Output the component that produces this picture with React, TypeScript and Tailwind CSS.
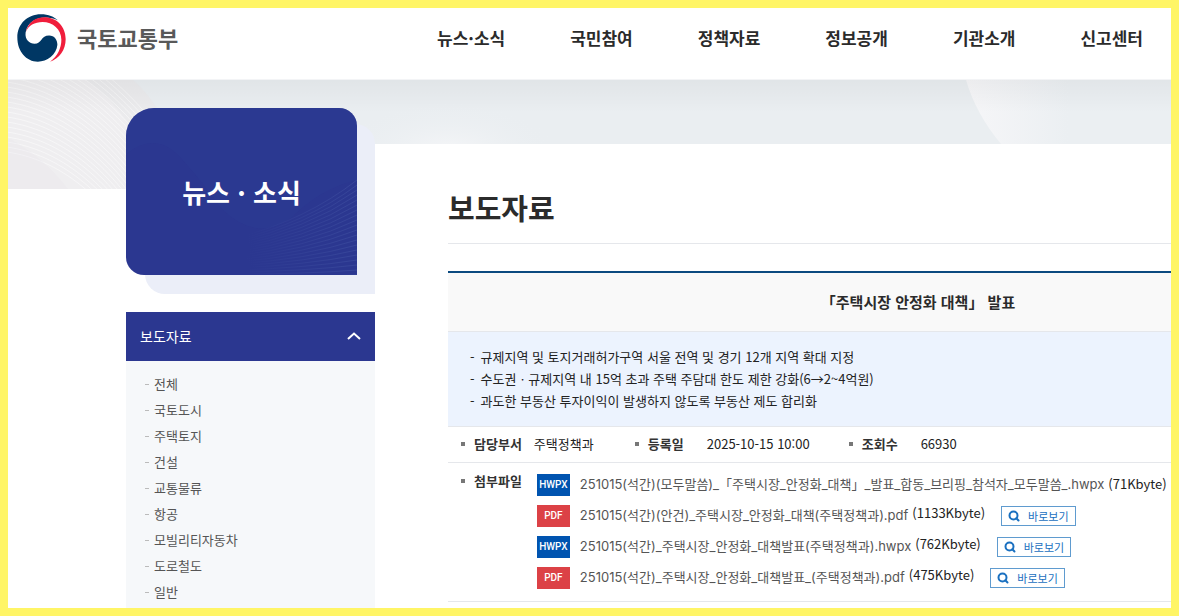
import { Search } from 'lucide-react'
import clsx from 'clsx'

interface Attachment {
  type: 'HWPX' | 'PDF'
  name: string
  size: string
  preview: boolean
}

const navItems = ['뉴스·소식', '국민참여', '정책자료', '정보공개', '기관소개', '신고센터']

const categories = [
  '전체',
  '국토도시',
  '주택토지',
  '건설',
  '교통물류',
  '항공',
  '모빌리티자동차',
  '도로철도',
  '일반'
]

const summary = [
  '규제지역 및 토지거래허가구역 서울 전역 및 경기 12개 지역 확대 지정',
  '수도권ㆍ규제지역 내 15억 초과 주택 주담대 한도 제한 강화(6→2~4억원)',
  '과도한 부동산 투자이익이 발생하지 않도록 부동산 제도 합리화'
]

const attachments: Attachment[] = [
  {
    type: 'HWPX',
    name: '251015(석간)(모두말씀)_「주택시장_안정화_대책」_발표_합동_브리핑_참석자_모두말씀_.hwpx',
    size: '(71Kbyte)',
    preview: false
  },
  { type: 'PDF', name: '251015(석간)(안건)_주택시장_안정화_대책(주택정책과).pdf', size: '(1133Kbyte)', preview: true },
  { type: 'HWPX', name: '251015(석간)_주택시장_안정화_대책발표(주택정책과).hwpx', size: '(762Kbyte)', preview: true },
  { type: 'PDF', name: '251015(석간)_주택시장_안정화_대책발표_(주택정책과).pdf', size: '(475Kbyte)', preview: true }
]

function Logo() {
  return (
    <a href="#" className="flex items-center gap-[11px]">
      <svg viewBox="50 42 148 145" className="h-12 w-[49px]" aria-hidden="true">
        <path
          fill="#003764"
          d="M51 113C51 72 82 43 122 43C145 43 163 51 173 61C140 45 85 50 76 98C73 120 88 132 103 132C125 132 122 107 147 107C163 107 172 120 172 135C170 165 140 186 113 186C78 186 51 155 51 113Z"
        />
        <path
          fill="#f01e3c"
          d="M76 98C84 66 106 52 132 52C170 52 197 80 197 118C197 150 178 176 150 186C172 170 184 146 184 120C184 88 158 66 127 66C104 66 84 76 76 98Z"
        />
      </svg>
      <span className="pb-[2px] text-[22px] font-bold text-[#595959]">국토교통부</span>
    </a>
  )
}

function Header() {
  return (
    <header className="relative z-10 flex h-[72px] items-start justify-between border-b border-gray-100 bg-white pr-7 pl-[9px]">
      <div className="pt-[6px]">
        <Logo />
      </div>
      <nav className="flex gap-[65px] pt-4 text-[17px] leading-7 font-bold text-[#2b2b2b]">
        {navItems.map((item) => (
          <a key={item} href="#">
            {item}
          </a>
        ))}
      </nav>
    </header>
  )
}

/* Grey banner with fine wave lines behind the sidebar card */
function Banner() {
  return (
    <svg
      className="absolute inset-x-0 top-0 h-[109px] w-full"
      viewBox="0 0 1163 109"
      preserveAspectRatio="xMinYMin slice"
      aria-hidden="true"
    >
      <defs>
        <linearGradient id="shade" x1="0" y1="0" x2="0" y2="1">
          <stop offset="0" stopColor="#000" stopOpacity="0.04" />
          <stop offset="0.3" stopColor="#000" stopOpacity="0" />
        </linearGradient>
        <linearGradient id="right" x1="0" y1="0" x2="1" y2="0">
          <stop offset="0" stopColor="#f6f6f8" />
          <stop offset="0.5" stopColor="#ebeff2" />
        </linearGradient>
        <radialGradient id="glow">
          <stop offset="0" stopColor="#f5f6f8" />
          <stop offset="1" stopColor="#eaeef1" stopOpacity="0" />
        </radialGradient>
      </defs>
      <rect width="1163" height="109" fill="#eaeef1" />
      <path d="M0 0H125Q150 22 165 60V109H0Z" fill="#ebebed" />
      <path d="M0 0H78Q104 18 120 44V109H0Z" fill="#efeef0" />
      {Array.from({ length: 26 }, (_, i) => (
        <path
          key={i}
          d={`M-10 ${i * 5 - 54}C40 ${i * 5 - 50} 90 ${i * 5 - 20} 135 ${i * 6 + 30}`}
          fill="none"
          stroke="#fff"
          strokeOpacity="0.45"
        />
      ))}
      <path d="M0 58Q35 76 60 109H0Z" fill="#e9e5ea" fillOpacity="0.3" />
      <ellipse cx="440" cy="72" rx="110" ry="50" fill="url(#glow)" />
      <path d="M958 0Q968 34 993 64V109H1163V0Z" fill="url(#right)" />
      <rect width="1163" height="109" fill="url(#shade)" />
    </svg>
  )
}

function Sidebar() {
  return (
    <aside className="w-[249px] shrink-0 pt-7">
      <div className="relative pr-[18px] pb-[19px]">
        <div className="absolute top-4 right-0 bottom-0 left-[19px] rounded-tr-[20px] rounded-bl-[20px] bg-[#ebeef8]" />
        <div className="relative flex h-[167px] items-center justify-center overflow-hidden rounded-tl-[28px] rounded-tr-[18px] rounded-bl-[18px] bg-[#2b3790]">
          <svg className="absolute inset-0 h-full w-full" viewBox="0 0 231 167" aria-hidden="true">
            <defs>
              <linearGradient id="wave" gradientUnits="userSpaceOnUse" x1="120" y1="0" x2="231" y2="0">
                <stop offset="0" stopColor="#4455a5" stopOpacity="0" />
                <stop offset="1" stopColor="#4455a5" stopOpacity="0.5" />
              </linearGradient>
            </defs>
            <path d="M0 46Q30 22 55 50T95 100Q130 135 165 110Q195 80 231 72V0H0Z" fill="#2e3c94" fillOpacity="0.4" />
            {Array.from({ length: 24 }, (_, i) => (
              <path
                key={i}
                d={`M110 ${130 + i * 2}Q180 ${112 + i * 3} 231 ${72 + i * 5}`}
                fill="none"
                stroke="url(#wave)"
              />
            ))}
          </svg>
          <h2 className="relative text-[26px] font-bold text-white">뉴스 · 소식</h2>
        </div>
      </div>

      <button
        type="button"
        className="mt-[18px] flex h-[49px] w-full items-center justify-between bg-[#2b3790] px-[14px] pb-[2px] text-sm text-white"
      >
        보도자료
        <svg viewBox="0 0 14 8" className="h-2 w-[14px]" fill="none" stroke="currentColor" strokeWidth="2" aria-hidden="true">
          <path d="M1 7L7 1.5L13 7" />
        </svg>
      </button>
      <ul className="bg-[#f6f8fa] py-[10px] pl-[19px] text-[13px] leading-[26px] text-[#555]">
        {categories.map((category) => (
          <li key={category} className="flex items-center gap-[5px]">
            <span className="h-px w-1 bg-[#bbb]" />
            <a href="#">{category}</a>
          </li>
        ))}
      </ul>
    </aside>
  )
}

function Label({ children }: { children: string }) {
  return (
    <dt className="flex items-center gap-[9px] font-bold text-[#333]">
      <span className="h-1 w-1 bg-[#777]" />
      {children}
    </dt>
  )
}

function AttachmentRow({ file }: { file: Attachment }) {
  return (
    <li className="flex h-[22px] items-center whitespace-nowrap">
      <span
        className={clsx(
          'flex h-[22px] w-[33px] items-center justify-center font-[Roboto] text-[10px] font-medium text-white',
          file.type === 'HWPX' ? 'bg-[#0054b0]' : 'bg-[#dc4146]'
        )}
      >
        {file.type}
      </span>
      <a href="#" className="ml-[10px] pb-[2px] font-[Inter,'Noto_Sans_CJK_KR',sans-serif] text-[#555]">
        {file.name}
      </a>
      <span className={clsx('ml-1', file.preview ? 'pb-[6px]' : 'pb-[2px]')}>{file.size}</span>
      {file.preview && (
        <button
          type="button"
          className="ml-4 flex h-5 items-center gap-2 border border-[#5f9bcf] px-[6px] text-[11px] text-[#1a70c0]"
        >
          <Search className="h-3 w-3" strokeWidth={4} />
          바로보기
        </button>
      )}
    </li>
  )
}

function Article() {
  return (
    <main className="mt-16 min-w-0 flex-1 bg-white pl-[73px]">
      <div className="min-w-[940px] text-[13px] text-[#222]">
        <h1 className="flex h-[100px] items-end border-b border-gray-200 pb-4 text-[29px] leading-10 font-bold text-[#2b2b2b]">
          보도자료
        </h1>
        <h3 className="mt-[27px] border-t-2 border-b border-t-[#0b4a80] border-b-gray-200 bg-[#f9f9f9] text-center text-[15px] leading-[58px] font-bold text-[#2b2b2b]">
          「주택시장 안정화 대책」 발표
        </h3>
        <ul className="border-b border-gray-200 bg-[#ecf3fe] py-[14px] pl-[22px] leading-[22px]">
          {summary.map((line) => (
            <li key={line} className="flex gap-[6px]">
              <span>-</span>
              {line}
            </li>
          ))}
        </ul>
        <dl className="flex h-9 items-center border-b border-gray-200 pb-[2px] pl-[13px]">
          <Label>담당부서</Label>
          <dd className="ml-3 w-[101px]">주택정책과</dd>
          <Label>등록일</Label>
          <dd className="ml-[23px] w-[142px]">2025-10-15 10:00</dd>
          <Label>조회수</Label>
          <dd className="ml-[23px]">66930</dd>
        </dl>
        <dl className="flex items-start gap-[15px] border-b border-gray-200 pt-[11px] pb-3 pl-[13px] leading-[14px]">
          <Label>첨부파일</Label>
          <dd>
            <ul className="flex flex-col gap-[9px]">
              {attachments.map((file) => (
                <AttachmentRow key={file.name} file={file} />
              ))}
            </ul>
          </dd>
        </dl>
      </div>
    </main>
  )
}

export default function App() {
  return (
    <div
      lang="ko"
      className="h-screen overflow-hidden border-8 border-[#fff566] bg-white font-['Noto_Sans_CJK_KR',sans-serif]"
    >
      <Header />
      <div className="relative">
        <Banner />
        <div className="relative flex pl-[118px]">
          <Sidebar />
          <Article />
        </div>
      </div>
    </div>
  )
}
